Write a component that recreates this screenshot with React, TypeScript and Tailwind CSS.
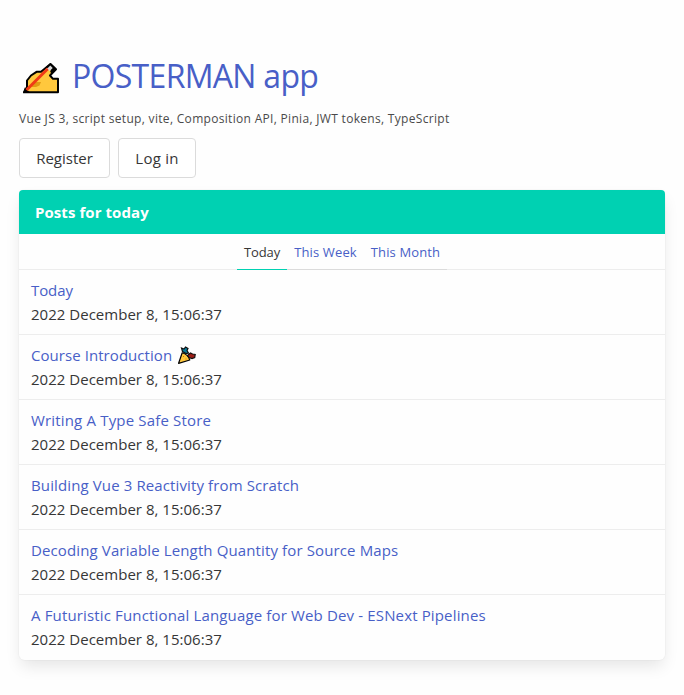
const posts = [
  { title: "Today", tracking: "tracking-[-0.1px]" },
  { title: "Course Introduction", tracking: "tracking-[0.06px]", party: true },
  { title: "Writing A Type Safe Store", tracking: "tracking-[0.17px]" },
  { title: "Building Vue 3 Reactivity from Scratch", tracking: "tracking-[0.12px]" },
  { title: "Decoding Variable Length Quantity for Source Maps", tracking: "tracking-[0.125px]" },
  { title: "A Futuristic Functional Language for Web Dev - ESNext Pipelines", tracking: "tracking-[0.15px]" },
];

function WritingHand() {
  return (
    <svg className="h-[36px] w-[42px] shrink-0" viewBox="0 0 42 36">
      <path d="M4 32.3 7 27V20.5L11 15.5 16.5 11.8H21L30.5 4 36 9.2 30 15.5 33 18.8H38V32.3Z" fill="#ffc83d" stroke="#000" strokeWidth="2" strokeLinejoin="round" />
      <path d="M15 22H21L19.5 25.5 16 27H11Z" fill="#e09a12" />
      <path d="M3 33.3 4.8 27.5 9.5 32Z" fill="#000" />
      <path d="M6.5 30 28.5 8" stroke="#f03a17" strokeWidth="3" />
      <path d="M25.5 7.6 30.3 3 36.6 9.2 32 13.8 30.2 12 31 8.5Z" fill="#000" />
      <path d="M28.5 9.8 31.5 6.8" stroke="#d9d9d9" strokeWidth="3.4" />
    </svg>
  );
}

function PartyPopper() {
  return (
    <svg className="h-5 w-[22px]" viewBox="0 0 22 20">
      <path d="M6.2 7.8C10 9 12.8 11.5 13.8 15L2.6 18.3Z" fill="#ffc83d" stroke="#000" strokeWidth="1.2" strokeLinejoin="round" />
      <path d="M5.5 3 8 4 9.5 2 12 3.5 11 5.5 12.5 8 10 8.5 6.5 6.5Z" fill="#087a98" stroke="#111" strokeWidth="1.2" />
      <path d="M11.5 10.5 14.5 8 16.5 9 19.2 9.5 18.7 12.5 16 13.5 13 12.5Z" fill="#9c1c15" stroke="#111" strokeWidth="1.2" />
      <path d="M7 11.5h1M9.5 14h1" stroke="#d67d00" />
    </svg>
  );
}

export default function App() {
  return (
    <div className="min-h-[695px] bg-[#fefefe] pt-[58px] pr-[19px] pl-[19px] font-['Open_Sans','Noto_Sans',sans-serif] text-base leading-6 text-[#363636]">
      <header>
        <h1 className="flex h-9 items-center text-[32px] leading-9 text-[#485fc7]">
          <span className="mt-[4px] mr-[10px] ml-px"><WritingHand /></span>
          <span className="whitespace-nowrap tracking-[-0.69px]">POSTERMAN app</span>
        </h1>
        <p className="mt-[15px] h-5 text-[12px] leading-5 tracking-[0.31px] whitespace-nowrap text-[#4a4a4a]">
          Vue JS 3, script setup, vite, Composition API, Pinia, JWT tokens, TypeScript
        </p>
        <div className="mt-[9px] flex gap-2 text-[15px]">
          <button className="h-10 w-[91px] rounded border border-[#dbdbdb] bg-white">Register</button>
          <button className="h-10 w-[78px] rounded border border-[#dbdbdb] bg-white tracking-[0.25px]">Log in</button>
        </div>
      </header>
      <nav className="mt-3 w-[646px] rounded-md shadow-[0_8px_16px_-2px_rgba(10,10,10,0.1),0_0_0_1px_rgba(10,10,10,0.02)]">
        <h2 className="h-11 rounded-t bg-[#00d1b2] px-4 text-[15px] leading-[44px] font-bold tracking-[0.07px] text-white">
          Posts for today
        </h2>
        <div className="flex h-9 justify-center border-b border-[#ededed] text-[13px] tracking-[0.13px]">
          <a className="h-9 w-[50px] border-b border-[#00d1b2] text-center leading-9 tracking-[-0.1px]">Today</a>
          <a className="h-9 w-[77px] border-b border-[#dbdbdb] text-center leading-9 text-[#485fc7]">This Week</a>
          <a className="h-9 w-[83px] border-b border-[#dbdbdb] text-center leading-9 text-[#485fc7]">This Month</a>
        </div>
        {posts.map((post) => (
          <article key={post.title} className="h-[65px] border-b border-[#ededed] px-3 pt-2 text-[15px] whitespace-nowrap last:border-b-0">
            <a className="flex h-6 items-center text-[#485fc7]">
              <span className={post.tracking}>{post.title}</span>
              {post.party && <span className="ml-1"><PartyPopper /></span>}
            </a>
            <p className="tracking-[0.02px]">2022 December 8, 15:06:37</p>
          </article>
        ))}
      </nav>
    </div>
  );
}
